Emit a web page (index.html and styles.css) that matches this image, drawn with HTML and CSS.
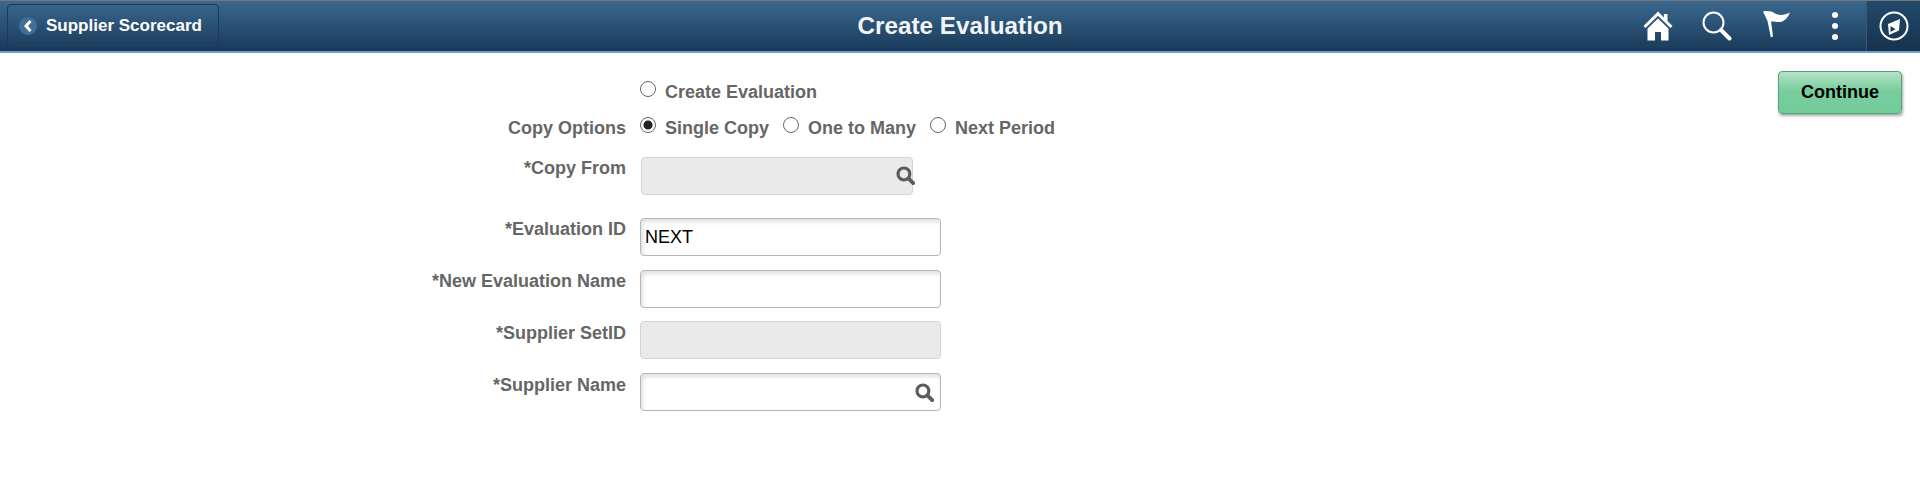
FILE: index.html
```html
<!DOCTYPE html>
<html lang="en">
<head>
  <meta charset="UTF-8" />
  <title>Create Evaluation</title>
  <link rel="stylesheet" href="styles.css">
</head>
<body>

  <header class="banner">
    <div class="banner-left">
      <button class="back-btn">
        <span class="back-circle">
          <svg width="10" height="12" viewBox="0 0 10 12"><path d="M7.500 1 3 6l4.500 5" fill="none" stroke="#fff" stroke-width="3"/></svg>
        </span>
        Supplier Scorecard
      </button>
    </div>
    <h1 class="banner-title">Create Evaluation</h1>
    <div class="banner-right">
      <svg class="nav-icon icon-home" width="30" height="30" viewBox="0 0 30 30">
        <path d="M15 0.5 0.5 15l2 2L15 4.800 27.500 17l2-2-5-4.900V3h-3.600v3.600z" fill="#fff"/>
        <path d="M15 7.500 4.500 17.600V29.500H12V21h6v8.500h7.500V17.600z" fill="#fff"/>
      </svg>
      <svg class="nav-icon icon-search" width="30" height="30" viewBox="0 0 30 30">
        <circle cx="11.500" cy="11.500" r="10" fill="none" stroke="#fff" stroke-width="2"/>
        <path d="M19 19l8.500 8.500" stroke="#fff" stroke-width="4" stroke-linecap="round"/>
      </svg>
      <svg class="nav-icon icon-flag" width="30" height="30" viewBox="0 3 30 30">
        <path d="M1 3.500C6 2.500 9 3 13 5.500c4 2 9 2 15-1-2 5-5.500 9-10 9.500-3.500.4-6-1-9-.5L11 28.500 8.800 29.200 5.500 13z" fill="#fff"/>
      </svg>
      <svg class="nav-icon icon-dots" width="6" height="28" viewBox="0 0 6 28">
        <circle cx="3" cy="3" r="3" fill="#fff"/>
        <circle cx="3" cy="14" r="3" fill="#fff"/>
        <circle cx="3" cy="25" r="3" fill="#fff"/>
      </svg>
      <div class="nav-compass">
        <svg width="30" height="30" viewBox="0 0 30 30">
          <circle cx="15" cy="15" r="13.500" fill="none" stroke="#fff" stroke-width="2"/>
          <path d="M21 8 9 13l1 11 10-4.500z" fill="#fff"/>
          <path d="M11.500 15v6l5-2.800z" fill="#1b3c5b"/>
        </svg>
      </div>
    </div>
  </header>

  <div class="page">
    <form class="eval-form">
      <div class="form-row row-first">
        <span class="field-label"></span>
        <div class="radio-group">
          <label class="radio-item"><input type="radio" name="copy" />Create Evaluation</label>
        </div>
      </div>
      <div class="form-row row-options">
        <span class="field-label">Copy Options</span>
        <div class="radio-group">
          <label class="radio-item"><input type="radio" name="copy" checked />Single Copy</label>
          <label class="radio-item"><input type="radio" name="copy" />One to Many</label>
          <label class="radio-item"><input type="radio" name="copy" />Next Period</label>
        </div>
      </div>
      <div class="form-row row-copy">
        <label class="field-label">*Copy From</label>
        <div class="field field-short field-off">
          <input type="text" disabled />
          <svg class="lookup" width="19" height="19" viewBox="0 0 18 18"><circle cx="7.500" cy="7.500" r="5.600" fill="none" stroke="#5c5c5c" stroke-width="3"/><path d="M12 12l4.300 4.300" stroke="#5c5c5c" stroke-width="3.600" stroke-linecap="round"/></svg>
        </div>
      </div>
      <div class="form-row row-id">
        <label class="field-label">*Evaluation ID</label>
        <div class="field"><input type="text" value="NEXT" /></div>
      </div>
      <div class="form-row row-name">
        <label class="field-label">*New Evaluation Name</label>
        <div class="field"><input type="text" /></div>
      </div>
      <div class="form-row row-setid">
        <label class="field-label">*Supplier SetID</label>
        <div class="field field-off"><input type="text" disabled /></div>
      </div>
      <div class="form-row row-supplier">
        <label class="field-label">*Supplier Name</label>
        <div class="field">
          <input type="text" />
          <svg class="lookup" width="19" height="19" viewBox="0 0 18 18"><circle cx="7.500" cy="7.500" r="5.600" fill="none" stroke="#5c5c5c" stroke-width="3"/><path d="M12 12l4.300 4.300" stroke="#5c5c5c" stroke-width="3.600" stroke-linecap="round"/></svg>
        </div>
      </div>
    </form>
    <button class="continue-btn">Continue</button>
  </div>

</body>
</html>
```

FILE: styles.css
```css
* {
  margin: 0;
  padding: 0;
  box-sizing: border-box;
}

body {
  background-color: white;
  font-family: "Liberation Sans", Arial, sans-serif;
  overflow: hidden;
}

.banner {
  height: 53px;
  display: flex;
  align-items: center;
  justify-content: space-between;
  border-top: 1px solid #777;
  border-bottom: 2px solid #6f9fd0;
  background: linear-gradient(#3a688f, #1a3a58);
}

.banner-left,
.banner-right {
  flex: 1;
  display: flex;
  align-items: center;
}

.banner-right {
  justify-content: flex-end;
  height: 100%;
}

.back-btn {
  width: 212px;
  height: 44px;
  margin-left: 7px;
  display: flex;
  align-items: center;
  gap: 9px;
  padding-left: 11px;
  border: 1px solid #1b3a57;
  border-radius: 4px;
  background: linear-gradient(#37648a, #1d3e5d);
  color: white;
  font-family: inherit;
  font-size: 17px;
  font-weight: bold;
}

.back-circle {
  width: 18px;
  height: 18px;
  display: flex;
  justify-content: center;
  align-items: center;
  border-radius: 50%;
  background-color: #3f6f99;
}

.banner-title {
  color: #f2f5f8;
  font-size: 24.3px;
  font-weight: bold;
}

.nav-icon {
  flex-shrink: 0;
}

.icon-home {
  margin-right: 29px;
}

.icon-search {
  margin-right: 30px;
}

.icon-flag {
  margin-right: 40px;
}

.icon-dots {
  margin-right: 28px;
}

.nav-compass {
  width: 54px;
  height: 100%;
  display: flex;
  justify-content: center;
  align-items: center;
  border-left: 1px solid #35597a;
  background: linear-gradient(#234a6c, #16324d);
}

.page {
  display: flex;
  justify-content: space-between;
  align-items: flex-start;
  padding: 18px 18px 0 0;
}

.eval-form {
  display: flex;
  flex-direction: column;
  padding-top: 9px;
}

.form-row {
  display: flex;
  align-items: flex-start;
  gap: 14px;
}

.row-first {
  margin-bottom: 14px;
}

.row-options {
  margin-bottom: 18px;
}

.row-options .field-label {
  padding-top: 1px;
}

.row-copy {
  margin-bottom: 23px;
}

.row-id {
  margin-bottom: 14px;
}

.row-name {
  margin-bottom: 13px;
}

.row-setid {
  margin-bottom: 14px;
}

.row-setid .field-label,
.row-supplier .field-label {
  padding-top: 1px;
}

.field-label {
  width: 626px;
  text-align: right;
  line-height: 22px;
  font-size: 18px;
  font-weight: bold;
  color: #666;
}

.radio-group {
  display: flex;
  gap: 14px;
  height: 22px;
}

.radio-item {
  display: flex;
  align-items: center;
  padding-top: 2px;
  line-height: 22px;
  font-size: 18px;
  font-weight: bold;
  color: #666;
}

.radio-item input {
  appearance: none;
  width: 16px;
  height: 16px;
  margin: -6px 9px 0 0;
  border: 1px solid #666;
  border-radius: 50%;
  background-color: white;
}

.radio-item input:checked {
  background: radial-gradient(circle, #222 0 4px, white 5px);
}

.field {
  position: relative;
  width: 301px;
  height: 38px;
}

.field-short {
  width: 272px;
  margin-left: 1px;
}

.field input {
  width: 100%;
  height: 100%;
  padding: 0 4px;
  border: 1px solid #b5b5b5;
  border-radius: 4px;
  box-shadow: inset 2px 3px 4px rgba(0, 0, 0, 0.12);
  font-family: inherit;
  font-size: 18px;
  color: black;
}

.field-off input {
  border-color: #d4d4d4;
  background-color: #eaeaea;
  box-shadow: none;
}

.lookup {
  position: absolute;
  right: 7px;
  top: 10px;
}

.field-short .lookup {
  right: -2px;
  top: 9px;
}

.continue-btn {
  width: 124px;
  height: 43px;
  border: 1px solid #4ea77a;
  border-radius: 4px;
  background: linear-gradient(#b6e3c8, #78cd9d 45%, #74cb9a);
  box-shadow: 1px 2px 3px rgba(0, 0, 0, 0.35);
  font-family: inherit;
  font-size: 18px;
  font-weight: bold;
  color: black;
}
```
